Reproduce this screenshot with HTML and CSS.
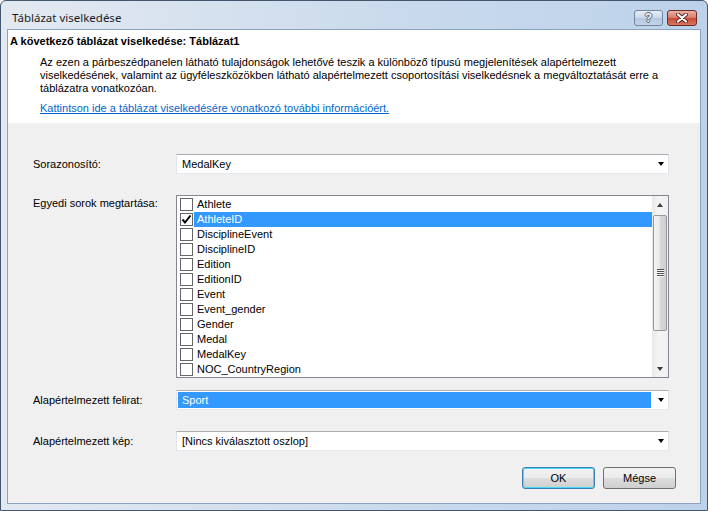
FILE: index.html
```html
<!DOCTYPE html>
<html lang="hu">
<head>
    <meta charset="UTF-8">
    <meta name="viewport" content="width=device-width, initial-scale=1.0">
    <title>Táblázat viselkedése</title>
    <link rel="stylesheet" href="styles.css">
</head>
<body>

<div class="window">
    <div class="titlebar">
        <span class="title">Táblázat viselkedése</span>
        <div class="caption-buttons">
            <span class="cap-btn help">?</span>
            <span class="cap-btn close">
                <svg width="14" height="10" viewBox="0 0 14 10">
                    <path d="M3 1.5 L11 8.5 M11 1.5 L3 8.5" stroke="#5a2420" stroke-width="4" stroke-linecap="round"/>
                    <path d="M3 1.5 L11 8.5 M11 1.5 L3 8.5" stroke="#fff" stroke-width="2.2" stroke-linecap="round"/>
                </svg>
            </span>
        </div>
    </div>

    <div class="client">
        <div class="intro">
            <div class="intro-title">A következő táblázat viselkedése: Táblázat1</div>
            <p class="intro-text">Az ezen a párbeszédpanelen látható tulajdonságok lehetővé teszik a különböző típusú megjelenítések alapértelmezett<br>viselkedésének, valamint az ügyféleszközökben látható alapértelmezett csoportosítási viselkedésnek a megváltoztatását erre a<br>táblázatra vonatkozóan.</p>
            <a class="intro-link" href="#">Kattintson ide a táblázat viselkedésére vonatkozó további információért.</a>
        </div>

        <div class="form">
            <div class="row row-first">
                <label class="label">Sorazonosító:</label>
                <div class="combo">
                    <span class="combo-value">MedalKey</span>
                    <span class="combo-arrow"></span>
                </div>
            </div>

            <div class="row row-list">
                <label class="label label-list">Egyedi sorok megtartása:</label>
                <div class="listbox">
                    <div class="list-items">
                        <div class="item"><span class="check"></span><span class="item-text">Athlete</span></div>
                        <div class="item selected"><span class="check checked">
                            <svg width="11" height="11" viewBox="0 0 11 11"><path d="M1.5 5.5 L4 8.5 L9.5 1.5" fill="none" stroke="#000" stroke-width="2"/></svg>
                        </span><span class="item-text">AthleteID</span></div>
                        <div class="item"><span class="check"></span><span class="item-text">DisciplineEvent</span></div>
                        <div class="item"><span class="check"></span><span class="item-text">DisciplineID</span></div>
                        <div class="item"><span class="check"></span><span class="item-text">Edition</span></div>
                        <div class="item"><span class="check"></span><span class="item-text">EditionID</span></div>
                        <div class="item"><span class="check"></span><span class="item-text">Event</span></div>
                        <div class="item"><span class="check"></span><span class="item-text">Event_gender</span></div>
                        <div class="item"><span class="check"></span><span class="item-text">Gender</span></div>
                        <div class="item"><span class="check"></span><span class="item-text">Medal</span></div>
                        <div class="item"><span class="check"></span><span class="item-text">MedalKey</span></div>
                        <div class="item"><span class="check"></span><span class="item-text">NOC_CountryRegion</span></div>
                    </div>
                    <div class="scrollbar">
                        <div class="scroll-btn"><span class="arrow-up"></span></div>
                        <div class="thumb"><span class="grip"></span></div>
                        <div class="scroll-track"></div>
                        <div class="scroll-btn"><span class="arrow-down"></span></div>
                    </div>
                </div>
            </div>

            <div class="row row-caption">
                <label class="label">Alapértelmezett felirat:</label>
                <div class="combo">
                    <span class="combo-value selected">Sport</span>
                    <span class="combo-arrow"></span>
                </div>
            </div>

            <div class="row row-image">
                <label class="label">Alapértelmezett kép:</label>
                <div class="combo">
                    <span class="combo-value">[Nincs kiválasztott oszlop]</span>
                    <span class="combo-arrow"></span>
                </div>
            </div>

            <div class="actions">
                <button class="btn btn-default">OK</button>
                <button class="btn">Mégse</button>
            </div>
        </div>
    </div>
</div>

</body>
</html>
```

FILE: styles.css
```css
body {
    margin: 0;
    font-family: "Liberation Sans", Arial, sans-serif;
    font-size: 11px;
    color: #000;
}

/* window frame */
.window {
    width: 708px;
    height: 511px;
    box-sizing: border-box;
    border: 1px solid #44566e;
    border-radius: 6px 6px 0 0;
    background: linear-gradient(to right, #e3e9f1, #c8d9ec 60%, #bcd2ea);
    display: flex;
    flex-direction: column;
}
.titlebar {
    height: 29px;
    display: flex;
    justify-content: space-between;
    padding: 0 10px 0 11px;
}
.title {
    font-family: "Noto Sans", "Liberation Sans", sans-serif;
    font-size: 11.5px;
    color: #1b1b1b;
    line-height: 14px;
    padding-top: 10px;
}
.caption-buttons {
    display: flex;
    gap: 4px;
    padding-top: 9px;
}
.cap-btn {
    height: 16px;
    box-sizing: border-box;
    border-radius: 3px;
    display: flex;
    align-items: center;
    justify-content: center;
}
.help {
    width: 29px;
    border: 1px solid #72859c;
    background: linear-gradient(#e6eef7, #cad8e8 50%, #b3c6dc 51%, #c3d5ea);
    color: #f4f7fb;
    font-family: "Liberation Sans", sans-serif;
    font-weight: bold;
    font-size: 12px;
    text-shadow: 1px 0 0 #50637b, -1px 0 0 #50637b, 0 1px 0 #50637b, 0 -1px 0 #50637b;
}
.close {
    width: 30px;
    border: 1px solid #6b2b26;
    background: linear-gradient(#eab2a6, #d97966 50%, #c74a35 51%, #d9775c);
}

/* client area */
.client {
    flex: 1;
    margin: 0 7px 7px 7px;
    background: #f0f0f0;
    box-shadow: 0 0 0 1px #8ca3bf;
    display: flex;
    flex-direction: column;
}
.intro {
    background: #fff;
    height: 93px;
    box-sizing: border-box;
    padding: 5px 0 0 2px;
    line-height: 13px;
    white-space: nowrap;
}
.intro-title {
    font-weight: bold;
}
.intro-text {
    margin: 8px 0 0 30px;
}
.intro-link {
    display: inline-block;
    margin: 7px 0 0 30px;
    color: #0066cc;
}

.form {
    padding: 31px 24px 0 25px;
}
.row {
    display: flex;
    align-items: flex-start;
}
.row-list {
    margin-top: 21px;
}
.row-caption {
    margin-top: 12px;
}
.row-image {
    margin-top: 21px;
}
.label {
    width: 143px;
    flex-shrink: 0;
    line-height: 20px;
}
.label-list {
    line-height: 15px;
    padding-top: 1px;
}

/* drop-down boxes */
.combo {
    width: 493px;
    height: 20px;
    box-sizing: border-box;
    background: #fff;
    border: 1px solid;
    border-color: #abadb3 #e2e3ea #e3e9ef #e2e3ea;
    display: flex;
    align-items: stretch;
}
.combo-value {
    flex: 1;
    margin: 1px 0 1px 1px;
    padding-left: 4px;
    line-height: 16px;
}
.combo-value.selected {
    background: #3399ff;
    color: #fff;
}
.combo-arrow {
    width: 17px;
    position: relative;
}
.combo-arrow::after {
    content: "";
    position: absolute;
    left: 7px;
    top: 7px;
    border-left: 3.5px solid transparent;
    border-right: 3.5px solid transparent;
    border-top: 4px solid #000;
}

/* list with checkboxes */
.listbox {
    width: 493px;
    height: 183px;
    box-sizing: border-box;
    border: 1px solid #828790;
    background: #fff;
    display: flex;
}
.list-items {
    flex: 1;
    padding-top: 1px;
}
.item {
    height: 15px;
    display: flex;
    align-items: center;
}
.check {
    width: 13px;
    height: 13px;
    box-sizing: border-box;
    border: 1px solid #666;
    background: #fff;
    margin-left: 3px;
    display: flex;
    align-items: center;
    justify-content: center;
}
.item-text {
    flex: 1;
    margin-left: 1px;
    padding-left: 3px;
    line-height: 15px;
}
.item.selected .item-text {
    background: #3399ff;
    color: #fff;
}

.scrollbar {
    width: 16px;
    background: linear-gradient(to right, #e8e8e8, #f4f4f4 40%, #f0f0f0);
    display: flex;
    flex-direction: column;
}
.scroll-btn {
    height: 17px;
    display: flex;
    align-items: center;
    justify-content: center;
}
.arrow-up {
    border-left: 3.5px solid transparent;
    border-right: 3.5px solid transparent;
    border-bottom: 4px solid #3c3c3c;
}
.arrow-down {
    border-left: 3.5px solid transparent;
    border-right: 3.5px solid transparent;
    border-top: 4px solid #3c3c3c;
}
.thumb {
    height: 116px;
    margin: 2px 1px 0 1px;
    box-sizing: border-box;
    border: 1px solid #979797;
    border-radius: 2px;
    background: linear-gradient(to right, #f4f4f4, #e8e8e8 45%, #d6d6d6 55%, #cfcfcf);
    display: flex;
    align-items: center;
    justify-content: center;
}
.grip {
    width: 7px;
    height: 8px;
    background: repeating-linear-gradient(#4f4f4f 0 1px, #f8f8f8 1px 2px);
}
.scroll-track {
    flex: 1;
}

/* dialog buttons */
.actions {
    display: flex;
    justify-content: flex-end;
    gap: 8px;
    margin-top: 16px;
}
.btn {
    width: 73px;
    height: 22px;
    border: 1px solid #707070;
    border-radius: 3px;
    background: linear-gradient(#f2f2f2, #ebebeb 50%, #dddddd 51%, #cfcfcf);
    font-family: "Liberation Sans", Arial, sans-serif;
    font-size: 11px;
    color: #000;
    padding: 0;
}
.btn-default {
    border-color: #3c7fb1;
    box-shadow: inset 0 0 0 1px #48d8fb;
}
```
